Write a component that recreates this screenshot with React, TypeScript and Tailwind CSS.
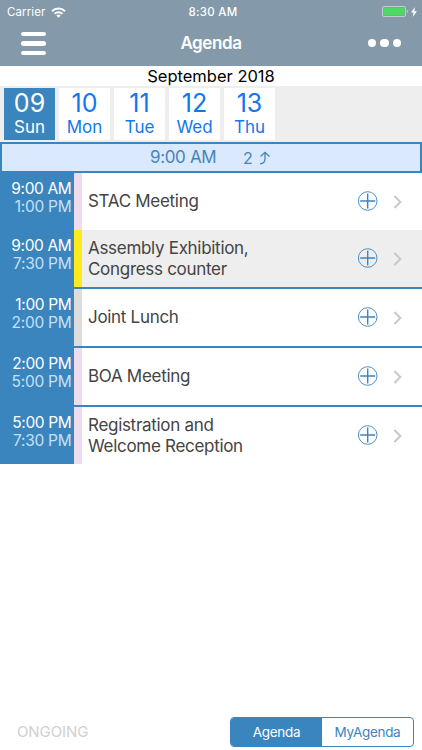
interface AgendaItem {
  start: string;
  end: string;
  title: string[];
  stripe: string;
  row: string;
  divider: boolean;
}

const days = [
  { date: '09', name: 'Sun' },
  { date: '10', name: 'Mon' },
  { date: '11', name: 'Tue' },
  { date: '12', name: 'Wed' },
  { date: '13', name: 'Thu' },
]

const items: AgendaItem[] = [
  { start: '9:00 AM', end: '1:00 PM', title: ['STAC Meeting'], stripe: 'bg-[#eedcee]', row: 'bg-white', divider: false },
  { start: '9:00 AM', end: '7:30 PM', title: ['Assembly Exhibition,', 'Congress counter'], stripe: 'bg-[#ffeb1c]', row: 'bg-[#eeeeee]', divider: false },
  { start: '1:00 PM', end: '2:00 PM', title: ['Joint Lunch'], stripe: 'bg-[#dcdcdc]', row: 'bg-white', divider: true },
  { start: '2:00 PM', end: '5:00 PM', title: ['BOA Meeting'], stripe: 'bg-[#eedcee]', row: 'bg-white', divider: true },
  { start: '5:00 PM', end: '7:30 PM', title: ['Registration and', 'Welcome Reception'], stripe: 'bg-[#eedcee]', row: 'bg-white', divider: true },
]

function StatusBar() {
  return (
    <div className="grid h-[21px] grid-cols-3 items-center text-[11.5px] leading-[21px]">
      <div className="flex items-center gap-[6px] pt-[1px] pl-[7px]">
        <span className="tracking-[0.1px]">Carrier</span>
        <svg width="15" height="11" viewBox="0 0 15 11" fill="none" stroke="white" strokeWidth="2">
          <path d="M1 4.2a9.3 9.3 0 0 1 13 0" />
          <path d="M3.5 6.9a5.7 5.7 0 0 1 8 0" />
          <path d="M7.5 10.8 5.3 8.6a3.2 3.2 0 0 1 4.4 0z" fill="white" stroke="none" />
        </svg>
      </div>
      <span className="pt-[2px] pl-[4px] text-center font-medium tracking-[0.25px]">8:30 AM</span>
      <div className="flex items-center justify-end gap-[2px] pr-[5px]">
        <svg width="27" height="11" viewBox="0 0 27 11">
          <rect x="0.5" y="0.5" width="23" height="10" rx="1.5" fill="none" stroke="#c3ced6" />
          <rect x="1.5" y="1.5" width="21" height="8" rx="0.8" fill="#4bd863" />
          <path d="M25 4v3q1-.4 1-1.5T25 4" fill="#c3ced6" />
        </svg>
        <svg width="6" height="10" viewBox="0 0 6 10" fill="white">
          <path d="M4 0 0 5.6h2.6L1.6 10 6 4.2H3.3z" />
        </svg>
      </div>
    </div>
  )
}

function ItemRow({ item }: { item: AgendaItem }) {
  return (
    <div className="flex bg-[#3b85bf]">
      <div className="w-[73.5px] shrink-0 pt-[7px] pr-[2px] text-right text-[15.5px] leading-[18px] tracking-[-0.35px] text-white">
        <p className={item.divider ? 'pt-[2px]' : ''}>{item.start}</p>
        <p className="tracking-[-0.25px] text-[#c6e0f5]">{item.end}</p>
      </div>
      <div className={`flex-1 ${item.divider ? 'border-t-2 border-[#3b85bf]' : ''}`}>
        <div className={`flex h-[57px] items-center ${item.row}`}>
          <div className={`h-full w-2 shrink-0 ${item.stripe}`} />
          <div className="flex-1 pl-[6.5px] text-[17px] leading-[20.5px] tracking-[-0.3px] text-[#444444]">
            {item.title.map((line) => (
              <p key={line} className="whitespace-nowrap">{line}</p>
            ))}
          </div>
          <svg className="mr-[15px] mb-[2px] shrink-0" width="20" height="20" viewBox="0 0 20 20" fill="none" stroke="#3b85bf">
            <circle cx="9.7" cy="10" r="9.3" strokeWidth="0.9" />
            <path d="M9.700 2.500v15M2.200 10h15" strokeWidth="1.4" />
          </svg>
          <svg className="mr-[20px] shrink-0" width="9" height="14" viewBox="0 0 9 14" fill="none" stroke="#c7c7cc" strokeWidth="1.9">
            <path d="m1.400 1 6 6-6 6" />
          </svg>
        </div>
      </div>
    </div>
  )
}

export default function App() {
  return (
    <div className="flex h-[750px] w-[422px] flex-col overflow-hidden bg-white font-['Inter',sans-serif]">
      <header className="h-[66px] shrink-0 bg-[#8499a9] text-white">
        <StatusBar />
        <div className="grid h-[45px] grid-cols-3 items-center">
          <div className="flex flex-col gap-[5px] pl-[21px]">
            <span className="h-[4.5px] w-[25px] rounded-full bg-white" />
            <span className="h-[4.5px] w-[25px] rounded-full bg-white" />
            <span className="h-[4.5px] w-[25px] rounded-full bg-white" />
          </div>
          <h1 className="text-center text-[17px] font-semibold tracking-[-0.4px]">Agenda</h1>
          <div className="flex justify-end gap-[4px] pr-[21px] pb-[1px]">
            <span className="size-[8.5px] rounded-full bg-white" />
            <span className="size-[8.5px] rounded-full bg-white" />
            <span className="size-[8.5px] rounded-full bg-white" />
          </div>
        </div>
      </header>

      <h2 className="h-[20px] shrink-0 text-center text-[16.5px] leading-[21px] text-black">September 2018</h2>

      <nav className="flex h-[56px] shrink-0 gap-1 bg-[#eeeeee] px-1 py-[2px]">
        {days.map((day, index) => (
          <button
            key={day.date}
            className={`flex w-[51px] flex-col items-center ${index === 0 ? 'bg-[#3b85bf] text-white' : 'bg-white text-[#1177ee]'}`}
          >
            <span className="h-[29px] text-[25px] leading-[30px]">{day.date}</span>
            <span className="text-[17px] leading-[21px]">{day.name}</span>
          </button>
        ))}
      </nav>

      <div className="flex h-[31px] shrink-0 items-center border-2 border-[#3b85bf] bg-[#dbe9fe] pt-[1px] pl-[148px] text-[17px] text-[#4585b9]">
        <span className="w-[93px] tracking-[-0.35px]">9:00 AM</span>
        <span className="text-[16px]">2</span>
        <svg className="ml-[6px]" width="12" height="14" viewBox="0 0 12 14" fill="none" stroke="#4585b9" strokeWidth="1.3">
          <path d="M1 12.800c3.500 0 5-1.500 5-5V1.500M1.500 5.500 6 1.300l4.500 4.200" />
        </svg>
      </div>

      <main className="flex-1">
        {items.map((item) => (
          <ItemRow key={item.start + item.title[0]} item={item} />
        ))}
      </main>

      <footer className="flex h-[37px] shrink-0 items-start justify-between pr-[8px] pl-[17px]">
        <span className="pt-[9px] text-[15px] leading-[20px] tracking-[-0.1px] text-[#d0d0d0]">ONGOING</span>
        <div className="mt-[4px] flex h-[30px] w-[184px] overflow-hidden rounded-[4px] border border-[#3b85bf] text-[13.5px] tracking-[-0.3px] text-[#3b85bf]">
          <button className="w-[91px] bg-[#3b85bf] text-white">Agenda</button>
          <button className="flex-1">MyAgenda</button>
        </div>
      </footer>
    </div>
  )
}
